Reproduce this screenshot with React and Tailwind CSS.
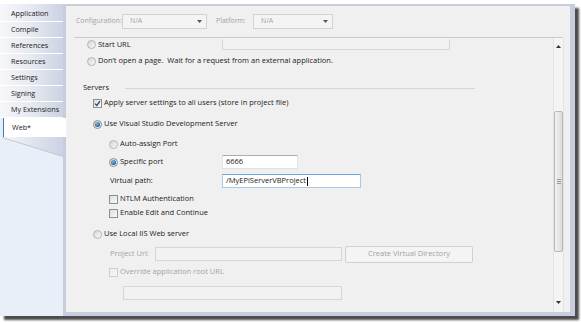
import React from "react";

function Radio({ checked, light }) {
  return (
    <span
      className={`flex w-[9px] h-[9px] shrink-0 items-center justify-center rounded-full border bg-gradient-to-br from-[#d4d4d4] to-[#fbfbfb] ${
        light ? "border-[#b4b4b4]" : "border-[#8c8c8c]"
      }`}
    >
      {checked && (
        <span className="block w-[5px] h-[5px] rounded-full bg-[radial-gradient(circle_at_40%_35%,#7cc0f0,#1b5d9e_70%)]" />
      )}
    </span>
  );
}

function Check({ checked, disabled }) {
  return (
    <span
      className={`flex w-[9px] h-[9px] shrink-0 items-center justify-center border bg-gradient-to-br ${
        disabled
          ? "border-[#cfcfcf] from-[#ececec] to-[#f6f6f6]"
          : "border-[#8e8f8f] from-[#dcdcdc] to-[#fafafa]"
      }`}
    >
      {checked && (
        <svg width="7" height="7" viewBox="0 0 7 7">
          <path d="M1 3.6 L2.8 5.4 L6 1.2" fill="none" stroke="#26437a" strokeWidth="1.3" />
        </svg>
      )}
    </span>
  );
}

function Dropdown({ width }) {
  return (
    <div
      className={`${width} shrink-0 h-[15px] flex items-center justify-between border border-[#d3d3d3] bg-[#f4f4f4] pl-[7px] pr-[4px] text-[#a3a3a3]`}
    >
      <span>N/A</span>
      <svg width="5" height="3" viewBox="0 0 5 3">
        <path d="M0 0 L5 0 L2.5 3 Z" fill="#555" />
      </svg>
    </div>
  );
}

const tabs = ["Application", "Compile", "References", "Resources", "Settings", "Signing", "My Extensions"];

export default function App() {
  return (
    <div className="w-[581px] h-[323px] overflow-hidden bg-white pt-[4px] font-['Open_Sans',sans-serif] text-[7.5px] leading-none text-[#1b1b1b]">
      <div className="flex w-[575px] h-[312px] shadow-[4px_4px_2px_rgba(0,0,0,0.7)]">
        {/* side tabs */}
        <div className="w-[63px] shrink-0 flex flex-col bg-[#e9eff8] text-[7.2px]">
          <div className="pt-[2px] bg-gradient-to-r from-[#f6f7fa] via-[#e6e9f0] to-[#cbd2e2]">
            {tabs.map((t) => (
              <div key={t} className="h-[16px] flex items-center pl-[11px] border-b border-white">
                {t}
              </div>
            ))}
          </div>
          <div className="relative z-10 ml-[3px] w-[63px] h-[19px] flex items-center pl-[8px] bg-white border-l-[1.5px] border-[#3a78cf]">
            Web*
          </div>
          <svg width="63" height="20" viewBox="0 0 63 20" className="block">
            <defs>
              <linearGradient id="fold" x1="0" x2="1" y1="0" y2="0">
                <stop offset="0" stopColor="#f6f7fa" />
                <stop offset="1" stopColor="#cbd2e2" />
              </linearGradient>
            </defs>
            <polygon points="0,0 63,0 63,20" fill="url(#fold)" />
            <line x1="2" y1="0.5" x2="63" y2="19.5" stroke="#c3c9d6" strokeWidth="1" />
          </svg>
        </div>

        {/* main panel */}
        <div className="flex-1 flex flex-col bg-[#f0f0f0] border-l-[3px] border-t-[2px] border-r-[5px] border-b-[4px] border-[#c5cdde]">
          <div className="h-[31px] flex items-center pl-[10px] text-[#a3a3a3] text-[6.9px]">
            <span className="w-[46px] shrink-0 whitespace-nowrap">Configuration:</span>
            <Dropdown width="w-[85px]" />
            <span className="ml-[9px] w-[37px] shrink-0">Platform:</span>
            <Dropdown width="w-[80px]" />
          </div>
          <div className="ml-[8px] w-[489px] h-px bg-[#cacaca]" />

          <div className="flex-1 flex">
            <div className="w-[487px] flex flex-col">
              {/* Start URL */}
              <div className="h-[13px] flex items-center pl-[21px]">
                <Radio light />
                <span className="ml-[2px] w-[124px]">Start URL</span>
                <div className="w-[228px] h-[11px] border border-[#d6d6d6] border-t-transparent bg-[#f2f2f2]" />
              </div>
              <div className="mt-[3px] h-[14px] flex items-center pl-[21px]">
                <Radio light />
                <span className="ml-[2px]">Don’t open a page.&nbsp; Wait for a request from an external application.</span>
              </div>

              {/* Servers */}
              <div className="mt-[13px] h-[14px] flex items-center pl-[17px]">
                <span className="w-[42px]">Servers</span>
                <div className="w-[350px] h-px bg-[#d6d6d6]" />
              </div>
              <div className="mt-[1px] h-[14px] flex items-center pl-[27px]">
                <Check checked />
                <span className="ml-[2px]">Apply server settings to all users (store in project file)</span>
              </div>
              <div className="mt-[7px] h-[14px] flex items-center pl-[27px]">
                <Radio checked />
                <span className="ml-[2px]">Use Visual Studio Development Server</span>
              </div>
              <div className="mt-[6px] h-[14px] flex items-center pl-[43px]">
                <Radio light />
                <span className="ml-[2px]">Auto-assign Port</span>
              </div>
              <div className="mt-[4px] h-[14px] flex items-center pl-[43px]">
                <Radio checked />
                <span className="ml-[2px] w-[102px]">Specific port</span>
                <div className="w-[76px] h-[14px] flex items-center pl-[3px] border border-[#e0e2ea] border-t-[#abadb3] bg-white">
                  6666
                </div>
              </div>
              <div className="mt-[5px] h-[14px] flex items-center pl-[44px]">
                <span className="w-[112px]">Virtual path:</span>
                <div className="w-[139px] h-[14px] flex items-center pl-[3px] border border-[#a9c9ec] border-t-[#6fa6dc] bg-white">
                  /MyEPiServerVBProject
                  <span className="ml-px w-px h-[9px] bg-black" />
                </div>
              </div>
              <div className="mt-[4px] h-[14px] flex items-center pl-[43px]">
                <Check />
                <span className="ml-[2px]">NTLM Authentication</span>
              </div>
              <div className="h-[14px] flex items-center pl-[43px]">
                <Check />
                <span className="ml-[2px]">Enable Edit and Continue</span>
              </div>

              {/* IIS */}
              <div className="mt-[7px] h-[14px] flex items-center pl-[27px]">
                <Radio light />
                <span className="ml-[2px]">Use Local IIS Web server</span>
              </div>
              <div className="mt-[6px] h-[14px] flex items-center pl-[44px] text-[#a3a3a3]">
                <span className="w-[45px]">Project Url:</span>
                <div className="w-[187px] h-[14px] border border-[#d6d6d6] bg-[#f2f2f2]" />
                <div className="ml-[3px] w-[128px] h-[17px] flex items-center justify-center border border-[#cfd1d4] bg-[#f4f4f4] rounded-[2px]">
                  Create Virtual Directory
                </div>
              </div>
              <div className="mt-[4px] h-[14px] flex items-center pl-[43px] text-[#a3a3a3]">
                <Check disabled />
                <span className="ml-[2px]">Override application root URL</span>
              </div>
              <div className="mt-[7px] ml-[57px] w-[219px] h-[14px] border border-[#d6d6d6] bg-[#f2f2f2]" />
            </div>

            {/* scrollbar */}
            <div className="w-[11px] flex flex-col pt-[1px] pb-[3px] bg-[#f4f4f4] border-x border-[#e4e4e4]">
              <div className="h-[14px] flex items-center justify-center">
                <svg width="5" height="3" viewBox="0 0 5 3">
                  <path d="M0 3 L5 3 L2.5 0 Z" fill="#333" />
                </svg>
              </div>
              <div className="mt-[58px] h-[141px] flex items-center justify-center border border-[#b8b8b8] rounded-[2px] bg-gradient-to-r from-[#f2f2f2] to-[#dcdcdc]">
                <div className="flex flex-col gap-[1px]">
                  <div className="w-[4px] h-px bg-[#9a9a9a]" />
                  <div className="w-[4px] h-px bg-[#9a9a9a]" />
                  <div className="w-[4px] h-px bg-[#9a9a9a]" />
                </div>
              </div>
              <div className="flex-1" />
              <div className="h-[14px] flex items-center justify-center">
                <svg width="5" height="3" viewBox="0 0 5 3">
                  <path d="M0 0 L5 0 L2.5 3 Z" fill="#333" />
                </svg>
              </div>
            </div>
          </div>
        </div>
      </div>
    </div>
  );
}
